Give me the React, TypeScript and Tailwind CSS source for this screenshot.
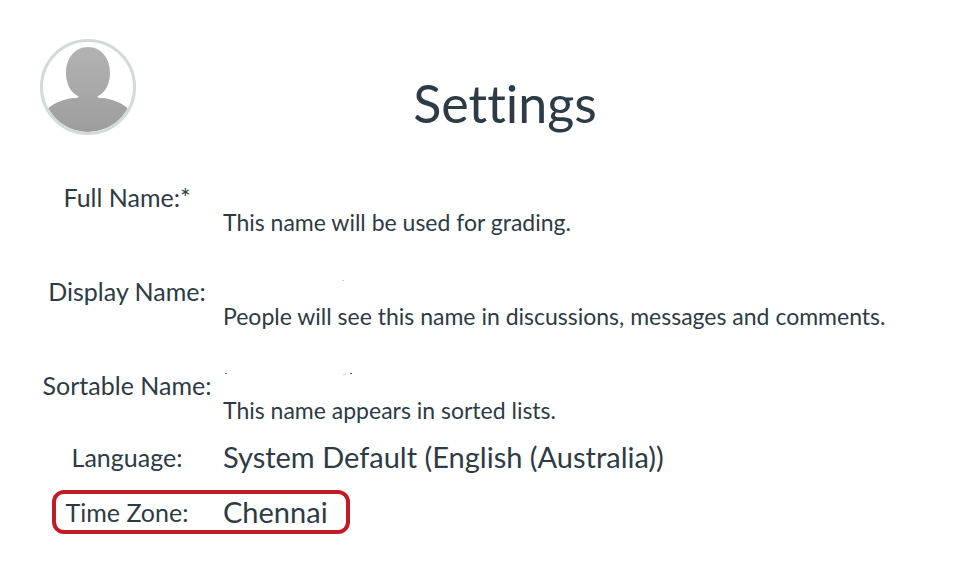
import React from "react";

interface Speck {
  x: number;
  y: number;
  width: number;
  color: string;
}

interface ProfileRow {
  label: string;
  hint: string;
  specks: Speck[];
}

// The names are blanked out, only a few stray marks of them remain
const nameRows: ProfileRow[] = [
  { label: "Full Name:*", hint: "This name will be used for grading.", specks: [] },
  {
    label: "Display Name:",
    hint: "People will see this name in discussions, messages and comments.",
    specks: [{ x: 119, y: 5, width: 2, color: "#cfcfcf" }],
  },
  {
    label: "Sortable Name:",
    hint: "This name appears in sorted lists.",
    specks: [
      { x: 2, y: 4, width: 2, color: "#85705f" },
      { x: 120, y: 5, width: 3, color: "#cfcfcf" },
      { x: 127, y: 4, width: 2, color: "#3c5a70" },
    ],
  },
];

const Avatar: React.FC = () => (
  <svg viewBox="0 0 96 96" className="w-24 h-24 shrink-0" role="img" aria-label="Profile picture">
    <defs>
      <linearGradient id="silhouette" x1="0" y1="0" x2="0" y2="1">
        <stop offset="0" stopColor="#b3b3b3" />
        <stop offset="1" stopColor="#9d9d9d" />
      </linearGradient>
      <clipPath id="avatar-clip">
        <circle cx="48" cy="48" r="45" />
      </clipPath>
    </defs>
    <circle cx="48" cy="48" r="46" fill="#fff" />
    <g clipPath="url(#avatar-clip)">
      <path
        fill="url(#silhouette)"
        d="M48 8C61 8 70 19 70 34C70 44 66 52 60 56C56 58 57 59 62 59C74 60 84 65 91 72V94H5V72C12 65 22 60 34 59C39 59 40 58 36 56C30 52 26 44 26 34C26 19 35 8 48 8Z"
      />
    </g>
    <circle cx="48" cy="48" r="46.5" fill="none" stroke="#d3dad9" strokeWidth="3" />
  </svg>
);

const App: React.FC = () => {
  return (
    <main className="min-h-screen bg-white px-10 pt-[39px] pb-8 text-[#2d3b45] font-['Lato',sans-serif] [font-variant-ligatures:none]">
      <header className="flex items-start">
        <Avatar />
        <h1 className="grow pt-8 pr-11 text-center text-[52px] leading-[64px]">Settings</h1>
      </header>

      <dl className="mt-[46px]">
        {nameRows.map((row) => (
          <div key={row.label} className="grid grid-cols-[174px_1fr] gap-x-[9px] pb-[37px]">
            <dt className="text-center text-[25px] leading-8">{row.label}</dt>
            <dd className="text-[23px] leading-8">
              <svg className="block h-[25px] w-36" aria-hidden="true">
                {row.specks.map((speck) => (
                  <rect key={speck.x} x={speck.x} y={speck.y} width={speck.width} height="1" fill={speck.color} />
                ))}
              </svg>
              {row.hint}
            </dd>
          </div>
        ))}
        <div className="-mt-6 grid grid-cols-[174px_1fr] gap-x-[9px] items-center">
          <dt className="text-center text-[25px] leading-9">Language:</dt>
          <dd className="text-[29px] leading-9">System Default (English (Australia))</dd>
        </div>
        <div className="ml-3 mt-[15px] grid w-fit grid-cols-[150px_1fr] items-center rounded-xl border-4 border-[#c01c28] pr-[18px]">
          <dt className="pr-2 text-center text-[25px] leading-9">Time Zone:</dt>
          <dd className="pl-[17px] text-[29px] leading-9">Chennai</dd>
        </div>
      </dl>
    </main>
  );
};

export default App;
